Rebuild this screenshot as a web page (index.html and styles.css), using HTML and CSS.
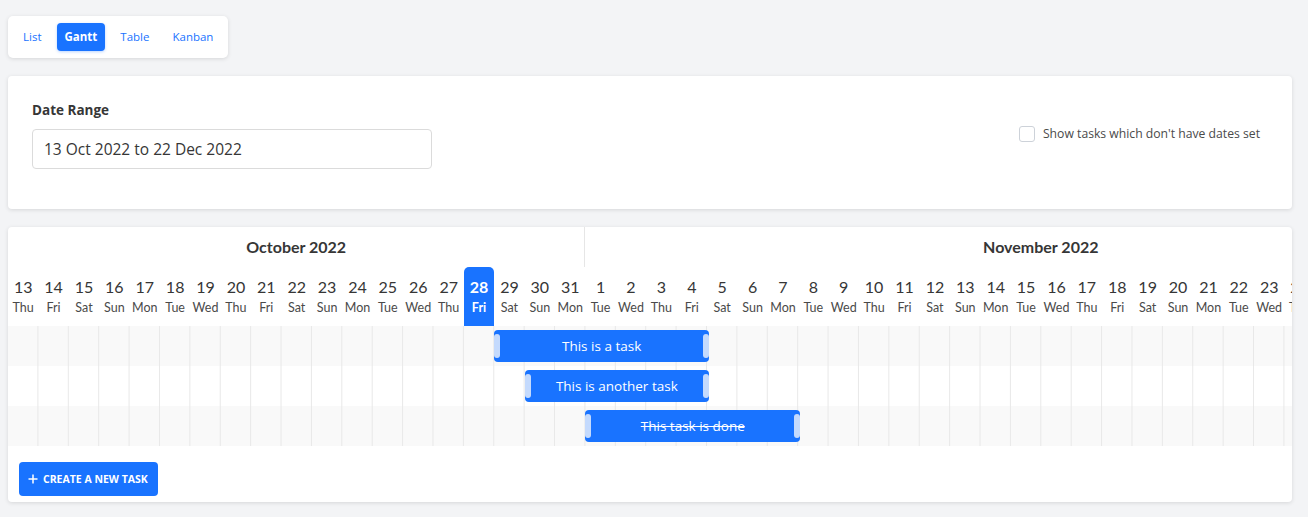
FILE: index.html
```html
<!DOCTYPE html>
<html lang="en">
<head>
    <meta charset="UTF-8">
    <meta name="viewport" content="width=device-width, initial-scale=1.0">
    <title>Project - Gantt</title>
    <link rel="stylesheet" href="styles.css">
</head>
<body>
    <div class="app">
        <div class="view-switcher">
            <a class="view-link" href="#">List</a>
            <a class="view-link is-active" href="#">Gantt</a>
            <a class="view-link" href="#">Table</a>
            <a class="view-link" href="#">Kanban</a>
        </div>

        <div class="card options-card">
            <div class="field">
                <label class="field-label" for="dateRange">Date Range</label>
                <input class="field-input" id="dateRange" type="text" value="13 Oct 2022 to 22 Dec 2022">
            </div>
            <label class="checkbox">
                <span class="checkbox-box"></span>
                Show tasks which don't have dates set
            </label>
        </div>

        <div class="card gantt-card">
            <div class="gantt-scroll">
                <div class="gantt-chart">
                    <div class="gantt-months" id="months"></div>
                    <div class="gantt-days" id="days"></div>
                    <div class="gantt-rows">
                        <div class="gantt-row">
                            <div class="task-bar" style="grid-column: 17 / 24;">
                                <span class="handle"></span>
                                <span class="task-label">This is a task</span>
                                <span class="handle"></span>
                            </div>
                        </div>
                        <div class="gantt-row">
                            <div class="task-bar" style="grid-column: 18 / 24;">
                                <span class="handle"></span>
                                <span class="task-label">This is another task</span>
                                <span class="handle"></span>
                            </div>
                        </div>
                        <div class="gantt-row">
                            <div class="task-bar is-done" style="grid-column: 20 / 27;">
                                <span class="handle"></span>
                                <span class="task-label">This task is done</span>
                                <span class="handle"></span>
                            </div>
                        </div>
                    </div>
                </div>
            </div>
            <div class="gantt-footer">
                <button class="new-task-button">
                    <svg width="10" height="10" viewBox="0 0 10 10" aria-hidden="true">
                        <path d="M5 0.5v9M0.5 5h9" stroke="#fff" stroke-width="1.5" fill="none"/>
                    </svg>
                    Create a new task
                </button>
            </div>
        </div>
    </div>

    <script>
        document.addEventListener('DOMContentLoaded', () => {
            const monthsEl = document.getElementById('months');
            const daysEl = document.getElementById('days');
            const weekdays = ['Sun', 'Mon', 'Tue', 'Wed', 'Thu', 'Fri', 'Sat'];
            const monthNames = ['January', 'February', 'March', 'April', 'May', 'June', 'July',
                'August', 'September', 'October', 'November', 'December'];

            const start = new Date(2022, 9, 13);
            const end = new Date(2022, 11, 22);
            const today = new Date(2022, 9, 28);

            let spans = [];
            for (let d = new Date(start); d <= end; d.setDate(d.getDate() + 1)) {
                const last = spans[spans.length - 1];
                if (!last || last.month !== d.getMonth()) {
                    spans.push({ month: d.getMonth(), year: d.getFullYear(), days: 1 });
                } else {
                    last.days++;
                }

                const cell = document.createElement('div');
                cell.className = 'day';
                if (d.getTime() === today.getTime()) {
                    cell.classList.add('is-today');
                }
                cell.innerHTML = `<span class="day-number">${d.getDate()}</span>` +
                    `<span class="day-name">${weekdays[d.getDay()]}</span>`;
                daysEl.appendChild(cell);
            }

            spans.forEach(span => {
                const cell = document.createElement('div');
                cell.className = 'month';
                cell.style.gridColumn = `span ${span.days}`;
                cell.textContent = `${monthNames[span.month]} ${span.year}`;
                monthsEl.appendChild(cell);
            });
        });
    </script>
</body>
</html>
```

FILE: styles.css
```css
body {
    margin: 0;
    background-color: #f3f4f6;
    font-family: "Open Sans", Arial, sans-serif;
    color: #363636;
}

.app {
    padding: 16px 16px 16px 8px;
}

/* View switcher */
.view-switcher {
    display: inline-flex;
    gap: 7px;
    padding: 7px;
    background-color: #fff;
    border-radius: 5px;
    box-shadow: 0 1px 4px rgba(10, 10, 10, 0.12);
}

.view-link {
    display: block;
    padding: 0 8px;
    line-height: 28px;
    font-size: 11.5px;
    color: #1973ff;
    text-decoration: none;
    border-radius: 4px;
}

.view-link.is-active {
    background-color: #1973ff;
    color: #fff;
    font-weight: bold;
    box-shadow: 0 1px 3px rgba(25, 115, 255, 0.3);
}

/* Cards */
.card {
    background-color: #fff;
    border-radius: 4px;
    box-shadow: 0 1px 4px rgba(10, 10, 10, 0.12);
    margin-top: 18px;
}

.options-card {
    display: flex;
    justify-content: space-between;
    align-items: flex-start;
    padding: 24px 32px 40px 24px;
}

.field-label {
    display: block;
    font-size: 13.5px;
    font-weight: bold;
    line-height: 21px;
    margin-bottom: 8px;
}

.field-input {
    display: block;
    width: 400px;
    height: 40px;
    box-sizing: border-box;
    padding: 0 11px;
    border: 1px solid #dbdbdb;
    border-radius: 4px;
    font-family: inherit;
    font-size: 15.5px;
    color: #363636;
}

.checkbox {
    display: flex;
    align-items: center;
    gap: 8px;
    margin-top: 24px;
    font-size: 12.2px;
    line-height: 20px;
    color: #4a4a4a;
}

.checkbox-box {
    width: 14px;
    height: 14px;
    border: 1.5px solid #cdd2d9;
    border-radius: 3px;
}

/* Gantt chart */
.gantt-card {
    padding-bottom: 6px;
}

.gantt-scroll {
    overflow: hidden;
    border-radius: 4px 4px 0 0;
}

.gantt-chart {
    width: calc(71 * 30.4px);
    font-family: Lato, "Open Sans", sans-serif;
}

.gantt-months,
.gantt-days,
.gantt-row {
    display: grid;
    grid-template-columns: repeat(71, 30.4px);
}

.month {
    height: 40px;
    line-height: 40px;
    text-align: center;
    font-size: 16px;
    font-weight: bold;
    color: #363636;
    border-right: 1px solid #e6e6e6;
    box-sizing: border-box;
}

.day {
    display: flex;
    flex-direction: column;
    align-items: center;
    height: 59px;
    padding-top: 8px;
    box-sizing: border-box;
    color: #363636;
    white-space: nowrap;
}

.day-number {
    font-size: 16px;
    line-height: 24px;
}

.day-name {
    font-size: 12.5px;
    line-height: 18px;
    color: #4a4a4a;
}

.day.is-today {
    background-color: #1973ff;
    border-radius: 5px 5px 0 0;
    font-weight: bold;
}

.day.is-today .day-number,
.day.is-today .day-name {
    color: #fff;
}

.gantt-row {
    height: 40px;
    align-items: center;
    background-image: linear-gradient(to right, transparent 29.4px, #e8e8e8 29.4px);
    background-size: 30.4px 100%;
}

.gantt-row:nth-child(odd) {
    background-color: #f9f9f9;
}

.task-bar {
    grid-row: 1;
    display: flex;
    align-items: center;
    height: 32px;
    margin-right: -2px;
    background-color: #1973ff;
    border-radius: 4px;
    color: #fff;
    font-family: "Open Sans", sans-serif;
    font-size: 13.5px;
}

.task-label {
    flex: 1;
    text-align: center;
    white-space: nowrap;
}

.task-bar.is-done .task-label {
    text-decoration: line-through;
}

.handle {
    width: 6px;
    height: 24px;
    background-color: #c4dafd;
    border-radius: 3px;
}

.gantt-footer {
    padding: 16px 11px 0;
}

.new-task-button {
    display: inline-flex;
    align-items: center;
    gap: 5px;
    height: 34px;
    padding: 0 10px 0 9px;
    border: none;
    border-radius: 4px;
    background-color: #1973ff;
    color: #fff;
    font-family: "Open Sans", sans-serif;
    font-size: 10.5px;
    font-weight: bold;
    text-transform: uppercase;
    cursor: pointer;
}
```
